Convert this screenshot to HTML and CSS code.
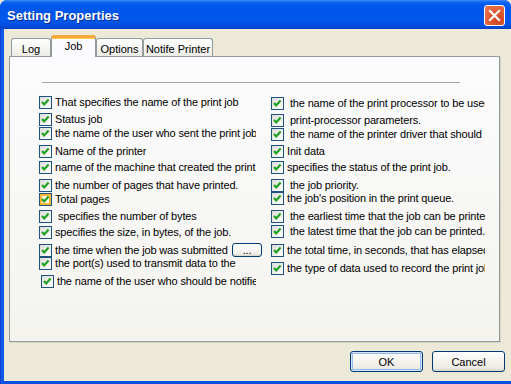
FILE: index.html
```html
<!DOCTYPE html>
<html>
<head>
<meta charset="utf-8">
<link rel="stylesheet" href="styles.css">
</head>
<body>
<div class="window">
  <div class="titlebar">
    <span class="title">Setting Properties</span>
    <div class="close"><svg width="21" height="21" viewBox="0 0 21 21"><path d="M6 6 L15 15 M15 6 L6 15" stroke="#fff" stroke-width="2.2" stroke-linecap="square"/></svg></div>
  </div>
  <div class="body">
    <div class="tabs">
      <div class="tab t-log">Log</div>
      <div class="tab t-job active">Job</div>
      <div class="tab t-opt">Options</div>
      <div class="tab t-not">Notife Printer</div>
    </div>
    <div class="panel">
      <div class="rule"></div>
      <div class="cols">
        <div class="col col-left">
          <div class="row m0"><span class="cb"><svg width="11" height="11" viewBox="0 0 11 11"><path d="M2 5 L4.2 7.4 L8.6 2.6" fill="none" stroke="#21A121" stroke-width="2.2"/></svg></span><span class="lbl">That specifies the name of the print job</span></div>
          <div class="row m4"><span class="cb"><svg width="11" height="11" viewBox="0 0 11 11"><path d="M2 5 L4.2 7.4 L8.6 2.6" fill="none" stroke="#21A121" stroke-width="2.2"/></svg></span><span class="lbl">Status job</span></div>
          <div class="row m1"><span class="cb"><svg width="11" height="11" viewBox="0 0 11 11"><path d="M2 5 L4.2 7.4 L8.6 2.6" fill="none" stroke="#21A121" stroke-width="2.2"/></svg></span><span class="lbl">the name of the user who sent the print job</span></div>
          <div class="row m5"><span class="cb"><svg width="11" height="11" viewBox="0 0 11 11"><path d="M2 5 L4.2 7.4 L8.6 2.6" fill="none" stroke="#21A121" stroke-width="2.2"/></svg></span><span class="lbl">Name of the printer</span></div>
          <div class="row m3"><span class="cb"><svg width="11" height="11" viewBox="0 0 11 11"><path d="M2 5 L4.2 7.4 L8.6 2.6" fill="none" stroke="#21A121" stroke-width="2.2"/></svg></span><span class="lbl">name of the machine that created the print job</span></div>
          <div class="row m5"><span class="cb"><svg width="11" height="11" viewBox="0 0 11 11"><path d="M2 5 L4.2 7.4 L8.6 2.6" fill="none" stroke="#21A121" stroke-width="2.2"/></svg></span><span class="lbl">the number of pages that have printed.</span></div>
          <div class="row m1"><span class="cb hover"><svg width="11" height="11" viewBox="0 0 11 11"><path d="M2 5 L4.2 7.4 L8.6 2.6" fill="none" stroke="#21A121" stroke-width="2.2"/></svg></span><span class="lbl">Total pages</span></div>
          <div class="row m4"><span class="cb"><svg width="11" height="11" viewBox="0 0 11 11"><path d="M2 5 L4.2 7.4 L8.6 2.6" fill="none" stroke="#21A121" stroke-width="2.2"/></svg></span><span class="lbl">&nbsp;specifies the number of bytes</span></div>
          <div class="row m3"><span class="cb"><svg width="11" height="11" viewBox="0 0 11 11"><path d="M2 5 L4.2 7.4 L8.6 2.6" fill="none" stroke="#21A121" stroke-width="2.2"/></svg></span><span class="lbl">specifies the size, in bytes, of the job.</span></div>
          <div class="row m5 row-btn"><span class="cb"><svg width="11" height="11" viewBox="0 0 11 11"><path d="M2 5 L4.2 7.4 L8.6 2.6" fill="none" stroke="#21A121" stroke-width="2.2"/></svg></span><span class="lbl lbl-short">the time when the job was submitted</span><span class="dots">...</span></div>
          <div class="row m0"><span class="cb"><svg width="11" height="11" viewBox="0 0 11 11"><path d="M2 5 L4.2 7.4 L8.6 2.6" fill="none" stroke="#21A121" stroke-width="2.2"/></svg></span><span class="lbl">the port(s) used to transmit data to the</span></div>
          <div class="row m5 shift2"><span class="cb"><svg width="11" height="11" viewBox="0 0 11 11"><path d="M2 5 L4.2 7.4 L8.6 2.6" fill="none" stroke="#21A121" stroke-width="2.2"/></svg></span><span class="lbl">the name of the user who should be notified</span></div>
        </div>
        <div class="col col-right">
          <div class="row m1"><span class="cb"><svg width="11" height="11" viewBox="0 0 11 11"><path d="M2 5 L4.2 7.4 L8.6 2.6" fill="none" stroke="#21A121" stroke-width="2.2"/></svg></span><span class="lbl">&nbsp;the name of the print processor to be used</span></div>
          <div class="row m4"><span class="cb"><svg width="11" height="11" viewBox="0 0 11 11"><path d="M2 5 L4.2 7.4 L8.6 2.6" fill="none" stroke="#21A121" stroke-width="2.2"/></svg></span><span class="lbl">&nbsp;print-processor parameters.</span></div>
          <div class="row m1"><span class="cb"><svg width="11" height="11" viewBox="0 0 11 11"><path d="M2 5 L4.2 7.4 L8.6 2.6" fill="none" stroke="#21A121" stroke-width="2.2"/></svg></span><span class="lbl">&nbsp;the name of the printer driver that should be used</span></div>
          <div class="row m4"><span class="cb"><svg width="11" height="11" viewBox="0 0 11 11"><path d="M2 5 L4.2 7.4 L8.6 2.6" fill="none" stroke="#21A121" stroke-width="2.2"/></svg></span><span class="lbl">Init data</span></div>
          <div class="row m3"><span class="cb"><svg width="11" height="11" viewBox="0 0 11 11"><path d="M2 5 L4.2 7.4 L8.6 2.6" fill="none" stroke="#21A121" stroke-width="2.2"/></svg></span><span class="lbl">specifies the status of the print job.</span></div>
          <div class="row m5"><span class="cb"><svg width="11" height="11" viewBox="0 0 11 11"><path d="M2 5 L4.2 7.4 L8.6 2.6" fill="none" stroke="#21A121" stroke-width="2.2"/></svg></span><span class="lbl">&nbsp;the job priority.</span></div>
          <div class="row m0"><span class="cb"><svg width="11" height="11" viewBox="0 0 11 11"><path d="M2 5 L4.2 7.4 L8.6 2.6" fill="none" stroke="#21A121" stroke-width="2.2"/></svg></span><span class="lbl">the job's position in the print queue.</span></div>
          <div class="row m5"><span class="cb"><svg width="11" height="11" viewBox="0 0 11 11"><path d="M2 5 L4.2 7.4 L8.6 2.6" fill="none" stroke="#21A121" stroke-width="2.2"/></svg></span><span class="lbl">&nbsp;the earliest time that the job can be printed</span></div>
          <div class="row m2"><span class="cb"><svg width="11" height="11" viewBox="0 0 11 11"><path d="M2 5 L4.2 7.4 L8.6 2.6" fill="none" stroke="#21A121" stroke-width="2.2"/></svg></span><span class="lbl">&nbsp;the latest time that the job can be printed.</span></div>
          <div class="row m6"><span class="cb"><svg width="11" height="11" viewBox="0 0 11 11"><path d="M2 5 L4.2 7.4 L8.6 2.6" fill="none" stroke="#21A121" stroke-width="2.2"/></svg></span><span class="lbl">the total time, in seconds, that has elapsed</span></div>
          <div class="row m5"><span class="cb"><svg width="11" height="11" viewBox="0 0 11 11"><path d="M2 5 L4.2 7.4 L8.6 2.6" fill="none" stroke="#21A121" stroke-width="2.2"/></svg></span><span class="lbl">the type of data used to record the print job</span></div>
        </div>
      </div>
    </div>
    <div class="buttons">
      <div class="btn btn-default">OK</div>
      <div class="btn">Cancel</div>
    </div>
  </div>
</div>
</body>
</html>
```

FILE: styles.css
```css
html, body {
  margin: 0;
  padding: 0;
  background: #ECE9D8;
}
body {
  width: 511px;
  height: 384px;
  overflow: hidden;
  font-family: "Liberation Sans", Arial, sans-serif;
  font-size: 11px;
  color: #000;
}
.window {
  width: 511px;
  height: 384px;
  display: flex;
  flex-direction: column;
  background: linear-gradient(90deg, #0838C8 0, #1660F0 2px, #0A4FE0 4px);
  border-radius: 7px 7px 0 0;
}
.titlebar {
  height: 29px;
  flex: none;
  display: flex;
  align-items: center;
  justify-content: space-between;
  padding: 0 6px 0 7px;
  border-radius: 7px 7px 0 0;
  background: linear-gradient(#3C8CF8 0, #1168F2 2px, #0058EE 5px, #0055EA 14px, #0058EE 20px, #0250E0 25px, #0040C8 29px);
}
.title {
  font-family: "Liberation Sans", Arial, sans-serif;
  font-weight: bold;
  font-size: 13px;
  color: #fff;
  text-shadow: 1px 1px 0 #0A2A90;
  padding-top: 1px;
}
.close {
  width: 21px;
  height: 21px;
  box-sizing: border-box;
  border: 1px solid #fff;
  border-radius: 3px;
  background: radial-gradient(circle at 70% 75%, #CC4420 0, #E05A30 45%, #E97A55 100%);
  display: flex;
  margin-top: 1px;
}
.close svg {
  margin: -1px;
}
.body {
  flex: 1;
  margin: 0 0 3px 4px;
  background: #ECE9D8;
  padding: 6px 0 0 5px;
  display: flex;
  flex-direction: column;
}
.tabs {
  height: 21px;
  display: flex;
  align-items: flex-end;
  padding-left: 2px;
  position: relative;
  z-index: 2;
}
.tab {
  height: 18px;
  box-sizing: border-box;
  border: 1px solid #919B9C;
  border-bottom: none;
  border-radius: 3px 3px 0 0;
  background: linear-gradient(#FFFFFF, #F3F3EF 60%, #ECEBE5);
  display: flex;
  align-items: center;
  justify-content: center;
  padding-top: 2px;
  font-size: 11px;
}
.t-log { width: 40px; }
.t-job { width: 45px; }
.t-opt { width: 47px; }
.t-not { width: 70px; }
.tab.active {
  height: 22px;
  margin-bottom: -1px;
  background: #FCFCFE;
  border-top: 3px solid #F9A937;
  box-shadow: inset 0 1px 0 #FFC95A;
  padding-top: 0;
  padding-bottom: 4px;
}
.panel {
  width: 491px;
  height: 286px;
  box-sizing: border-box;
  border: 1px solid #919B9C;
  background: linear-gradient(#FCFCFE, #F4F3EE);
  box-shadow: 1px 1px 0 #D6D3C4;
}
.rule {
  margin: 25px 0 0 32px;
  width: 418px;
  height: 1px;
  background: #A7A6A0;
}
.cols {
  display: grid;
  grid-template-columns: 217px 214px;
  column-gap: 15px;
  padding-left: 29px;
  margin-top: 13px;
}
.col {
  display: flex;
  flex-direction: column;
}
.row {
  height: 13px;
  display: flex;
  align-items: center;
  gap: 3px;
  white-space: nowrap;
  overflow: hidden;
  line-height: 13px;
  letter-spacing: -0.15px;
}
.m0 { margin-top: 0; }
.m1 { margin-top: 1px; }
.m2 { margin-top: 2px; }
.m3 { margin-top: 3px; }
.m4 { margin-top: 4px; }
.m5 { margin-top: 5px; }
.m6 { margin-top: 6px; }
.shift2 { padding-left: 2px; }
.cb {
  flex: none;
  width: 13px;
  height: 13px;
  box-sizing: border-box;
  border: 1px solid #1C5180;
  background: linear-gradient(135deg, #DCDCD7, #FFFFFF);
  display: flex;
}
.cb.hover {
  box-shadow: inset 0 0 0 2px #F8B636;
  background: linear-gradient(135deg, #FFF0CF, #FFFFFF);
}
.lbl {
  overflow: hidden;
}
.row-btn {
  overflow: visible;
}
.lbl-short {
  width: 173px;
  flex: none;
}
.dots {
  flex: none;
  width: 30px;
  height: 14px;
  box-sizing: border-box;
  border: 1px solid #003C74;
  border-radius: 3px;
  background: linear-gradient(#FFFFFF, #F0EFEA 80%, #D8D3C8);
  display: flex;
  align-items: center;
  justify-content: center;
  line-height: 8px;
  margin-top: -2px;
  margin-left: 1px;
}
.buttons {
  display: flex;
  justify-content: flex-end;
  gap: 9px;
  padding-right: 6px;
  margin-top: 9px;
}
.btn {
  width: 73px;
  height: 21px;
  box-sizing: border-box;
  border: 1px solid #003C74;
  border-radius: 3px;
  background: linear-gradient(#FFFFFF, #F4F3EE 50%, #ECEBE6 85%, #D6D0C5);
  display: flex;
  align-items: center;
  justify-content: center;
  font-size: 11px;
}
.btn-default {
  box-shadow: inset 0 0 0 1px #CEE7FF, inset 0 0 0 2px #98B8F0;
}
```
